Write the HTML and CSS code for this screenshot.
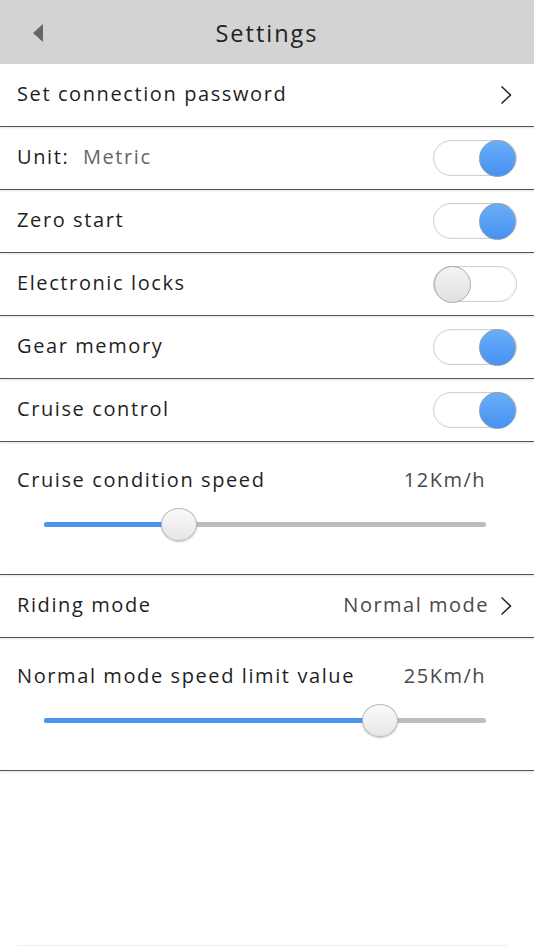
FILE: index.html
```html
<!DOCTYPE html>
<html lang="en">
<head>
  <meta charset="UTF-8">
  <meta name="viewport" content="width=device-width, initial-scale=1.0">
  <title>Settings</title>
  <link rel="stylesheet" href="styles.css">
</head>
<body>
  <!-- Title bar -->
  <header class="titlebar">
    <span class="back"></span>
    <h1>Settings</h1>
  </header>

  <div class="list">
    <div class="row">
      <span class="label">Set connection password</span>
      <svg class="chevron" viewBox="0 0 12 20"><path d="M1.5 1.5 L10.5 10 L1.5 18.5" /></svg>
    </div>

    <div class="row">
      <span class="label">Unit:&nbsp; <span class="muted">Metric</span></span>
      <div class="toggle on"><span class="knob"></span></div>
    </div>

    <div class="row">
      <span class="label">Zero start</span>
      <div class="toggle on"><span class="knob"></span></div>
    </div>

    <div class="row">
      <span class="label">Electronic locks</span>
      <div class="toggle"><span class="knob"></span></div>
    </div>

    <div class="row">
      <span class="label">Gear memory</span>
      <div class="toggle on"><span class="knob"></span></div>
    </div>

    <div class="row">
      <span class="label">Cruise control</span>
      <div class="toggle on"><span class="knob"></span></div>
    </div>

    <!-- Cruise speed slider -->
    <div class="row slider-row">
      <div class="slider-head">
        <span class="label">Cruise condition speed</span>
        <span class="value">12Km/h</span>
      </div>
      <div class="slider">
        <div class="fill" style="width: 30.6%"></div>
        <span class="thumb" style="left: 30.6%"></span>
      </div>
    </div>

    <div class="row">
      <span class="label">Riding mode</span>
      <span class="right">
        <span class="value">Normal mode</span>
        <svg class="chevron" viewBox="0 0 12 20"><path d="M1.5 1.5 L10.5 10 L1.5 18.5" /></svg>
      </span>
    </div>

    <!-- Speed limit slider -->
    <div class="row slider-row">
      <div class="slider-head">
        <span class="label">Normal mode speed limit value</span>
        <span class="value">25Km/h</span>
      </div>
      <div class="slider">
        <div class="fill" style="width: 76%"></div>
        <span class="thumb" style="left: 76%"></span>
      </div>
    </div>
  </div>

  <div class="footer-line"></div>
</body>
</html>
```

FILE: styles.css
```css
/* General */
body {
  margin: 0;
  width: 534px;
  height: 950px;
  font-family: "Open Sans", "Lato", sans-serif;
  background: #ffffff;
  color: #1f1f1f;
  display: flex;
  flex-direction: column;
  overflow: hidden;
}

/* Title bar */
.titlebar {
  height: 64px;
  background-color: #d3d3d3;
  display: flex;
  align-items: center;
  justify-content: center;
  position: relative;
}

.titlebar h1 {
  margin: 0 0 -2px 0;
  font-size: 23.5px;
  font-weight: 400;
  color: #222;
  letter-spacing: 2px;
}

.back {
  position: absolute;
  left: 33px;
  top: 24px;
  width: 0;
  height: 0;
  border-top: 9.5px solid transparent;
  border-bottom: 9.5px solid transparent;
  border-right: 10px solid #666;
}

/* Rows */
.row {
  box-sizing: border-box;
  height: 63px;
  padding: 0 17px;
  display: flex;
  align-items: center;
  justify-content: space-between;
  border-bottom: 1.5px solid #555;
  box-shadow: 0 1px 2px rgba(0, 0, 0, 0.12);
}

.row > .label,
.right {
  margin-bottom: 4px;
}

.label {
  font-size: 20px;
  letter-spacing: 1.6px;
}

.muted {
  color: #666;
}

.value {
  font-size: 20px;
  color: #4a4a4a;
  letter-spacing: 1.5px;
}

.right {
  display: flex;
  align-items: center;
  gap: 11px;
}

.chevron {
  width: 12px;
  height: 20px;
  margin-right: 5px;
  fill: none;
  stroke: #222;
  stroke-width: 1.5;
}

.right .chevron {
  margin-top: 4px;
}

/* Toggles */
.toggle {
  width: 82px;
  height: 34px;
  border: 1.5px solid #d0d0d0;
  border-radius: 18px;
  background: #fff;
  box-shadow: inset 0 0 2px rgba(0, 0, 0, 0.1);
  display: flex;
  align-items: center;
  justify-content: flex-start;
}

.toggle.on {
  justify-content: flex-end;
}

.knob {
  width: 37px;
  height: 37px;
  border-radius: 50%;
  border: 1.5px solid #aaa;
  background: linear-gradient(#f4f4f4, #e0e0e0);
  box-sizing: border-box;
}

.toggle.on .knob {
  border-color: #8a9db5;
  background: linear-gradient(#6aaef8, #4692f2);
}

/* Sliders */
.slider-row {
  height: 133px;
  flex-direction: column;
  align-items: stretch;
  justify-content: flex-start;
}

.slider-head {
  display: flex;
  justify-content: space-between;
  padding-top: 25px;
  padding-right: 31px;
}

.slider-head .label,
.slider-head .value {
  line-height: 26px;
}

.slider {
  position: relative;
  margin: 29px 31px 0 27px;
  height: 5px;
  border-radius: 3px;
  background: #bdbdbd;
}

.fill {
  height: 100%;
  border-radius: 3px;
  background: #4b95ee;
}

.thumb {
  position: absolute;
  top: 50%;
  width: 36px;
  height: 33px;
  margin-left: -18px;
  margin-top: -17px;
  border-radius: 50%;
  border: 1px solid #b8b8b8;
  background: linear-gradient(#fafafa, #e6e6e6);
  box-shadow: 0 1px 2px rgba(0, 0, 0, 0.2);
  box-sizing: border-box;
}

.footer-line {
  margin: auto 26px 4px 17px;
  height: 1px;
  background: #efefef;
}
```
